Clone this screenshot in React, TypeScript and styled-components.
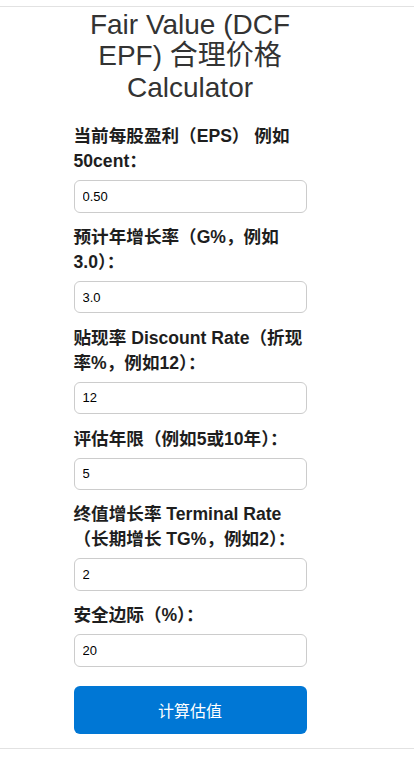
import styled, { createGlobalStyle } from 'styled-components';

const GlobalStyle = createGlobalStyle`
  html, body {
    margin: 0;
    padding: 0;
    background: #ffffff;
  }
  body {
    font-family: 'Liberation Sans', Arial, 'Noto Sans CJK SC', sans-serif;
  }
`;

// 输入项
const fields = [
  { label: '当前每股盈利（EPS） 例如50cent：', value: '0.50' },
  { label: '预计年增长率（G%，例如3.0）：', value: '3.0' },
  { label: '贴现率 Discount Rate（折现率%，例如12）：', value: '12' },
  { label: '评估年限（例如5或10年）：', value: '5' },
  { label: '终值增长率 Terminal Rate（长期增长 TG%，例如2）：', value: '2' },
  { label: '安全边际（%）：', value: '20' },
];

const App = () => {
  return (
    <>
      <GlobalStyle />
      <Page>
        <Shell>
          <Column>
            <Title>Fair Value (DCF EPF) 合理价格 Calculator</Title>
            {fields.map((f) => (
              <Field key={f.label}>
                <Label>{f.label}</Label>
                <Input type="text" defaultValue={f.value} />
              </Field>
            ))}
            <SubmitButton type="button">计算估值</SubmitButton>
          </Column>
        </Shell>
      </Page>
    </>
  );
};

export default App;

const Page = styled.div`
  margin-top: 6px;
  border-top: 1px solid #e2e2e2;
  border-bottom: 1px solid #e2e2e2;
`;

const Shell = styled.div`
  width: 380px;
`;

const Column = styled.div`
  width: 233px;
  margin: 0 auto;
  padding-bottom: 14px;
  display: flex;
  flex-direction: column;
`;

const Title = styled.h1`
  margin: 0 0 21px;
  padding-top: 2px;
  font-size: 28px;
  font-weight: 400;
  line-height: 31.4px;
  color: #333333;
  text-align: center;
`;

const Field = styled.div`
  display: flex;
  flex-direction: column;
  margin-bottom: 12.4px;
`;

const Label = styled.label`
  font-size: 17.6px;
  font-weight: 700;
  line-height: 25px;
  color: #1e1e1e;
  margin-bottom: 6px;
`;

const Input = styled.input`
  box-sizing: border-box;
  width: 100%;
  height: 32.4px;
  padding: 0 8px;
  border: 1px solid #cccccc;
  border-radius: 6px;
  font-family: 'Liberation Sans', Arial, sans-serif;
  font-size: 13px;
  color: #000000;
  background: #ffffff;
  outline: none;
`;

const SubmitButton = styled.button`
  margin-top: 7px;
  height: 48px;
  width: 100%;
  border: none;
  border-radius: 6px;
  background: #0077d5;
  color: #ffffff;
  font-family: 'Liberation Sans', 'Noto Sans CJK SC', sans-serif;
  font-size: 16px;
  cursor: pointer;
`;
